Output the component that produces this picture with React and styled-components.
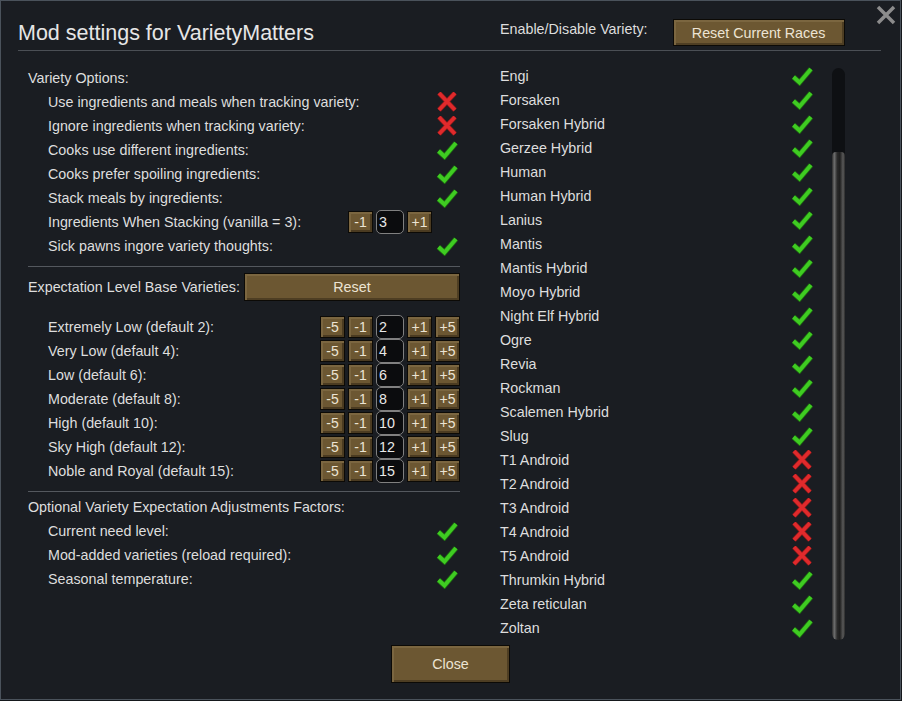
import React from 'react';
import styled, { createGlobalStyle } from 'styled-components';

const GlobalStyle = createGlobalStyle`
  body {
    margin: 0;
    background: #15181c;
    font-family: 'Liberation Sans', Arial, sans-serif;
  }
`;

const Window = styled.div`
  position: relative;
  width: 899px;
  height: 698px;
  background: #1a1d22;
  border: 1px solid #4a525b;
  display: flex;
  flex-direction: column;
  color: #dedede;
  font-size: 14.3px;
`;

const Header = styled.header`
  display: flex;
  align-items: flex-start;
  height: 49px;
  margin: 0 19px 0 17px;
  border-bottom: 1px solid #4b4f55;
`;

const Title = styled.h1`
  width: 482px;
  margin: 20px 0 0;
  font-size: 21.5px;
  font-weight: normal;
  line-height: 24px;
  color: #e6e6e6;
`;

const HeaderLabel = styled.span`
  margin-top: 18px;
  line-height: 20px;
`;

const Button = styled.button`
  font-family: inherit;
  font-size: 14.3px;
  color: #ece4d4;
  background: #6c5732;
  border: 1px solid #0c0a06;
  box-shadow: inset 2px 2px 0 #7b6640, inset -2px -2px 0 #4e3e23;
  padding: 0;
  cursor: pointer;
  width: ${(p) => p.$w || 'auto'};
  height: ${(p) => p.$h || '27px'};
`;

const HeaderButton = styled(Button)`
  margin: 18px 0 0 25px;
`;

const CloseX = styled.button`
  position: absolute;
  top: 3px;
  right: 3px;
  width: 22px;
  height: 22px;
  padding: 0;
  background: none;
  border: 0;
  cursor: pointer;
`;

const Body = styled.div`
  display: grid;
  grid-template-columns: 432px 345px;
  column-gap: 40px;
  padding-left: 27px;
  height: 589px;
`;

const Left = styled.div`
  padding-top: 15px;
`;

const Row = styled.div`
  display: flex;
  align-items: center;
  justify-content: space-between;
  height: 24px;
  padding-left: ${(p) => (p.$indent ? '20px' : '0')};
`;

const Divider = styled.hr`
  border: 0;
  border-top: 1px solid #54585e;
  margin: ${(p) => p.$m || '8px 0 6px'};
`;

const SectionHead = styled.div`
  display: flex;
  align-items: center;
  height: 28px;
  margin-bottom: 14px;

  ${Button} {
    flex: 1;
    margin-left: 4px;
    height: 28px;
  }
`;

const IconSlot = styled.span`
  display: flex;
  width: 22px;
  height: 20px;
  margin-right: 2px;
`;

const Stepper = styled.div`
  display: grid;
  grid-template-columns: 25px 25px 28px 25px 25px;
  column-gap: 3px;
  align-items: center;
`;

const StepBtn = styled(Button)`
  height: 22px;
  width: 100%;
  font-size: 14px;
  box-shadow: inset 2px 2px 0 #7b6640, inset -2px -2px 0 #4b3b21;
`;

const ValueBox = styled.div`
  box-sizing: border-box;
  height: 24px;
  background: #0b0c0e;
  border: 1px solid #808080;
  border-radius: 5px;
  padding: 3px 0 0 2px;
  font-size: 14.3px;
  color: #e8e8e8;
`;

const Right = styled.div`
  display: flex;
  padding-top: 13px;
`;

const RaceList = styled.div`
  width: 315px;
`;

const RaceRow = styled.div`
  display: flex;
  align-items: center;
  justify-content: space-between;
  height: 24px;
`;

const Track = styled.div`
  display: flex;
  flex-direction: column;
  justify-content: flex-end;
  width: 13px;
  height: 572px;
  margin: 4px 0 0 17px;
  background: #0e1013;
  border-radius: 7px;
`;

const Thumb = styled.div`
  height: 488px;
  border-radius: 4px 4px 6px 6px;
  background: linear-gradient(90deg, #2c2c2c 0%, #6e6e6e 18%, #2a2a2a 40%, #1e1e1e 60%, #5a5a5a 85%, #2a2a2a 100%);
`;

const Footer = styled.div`
  display: flex;
  justify-content: center;
  margin-top: 5px;
`;

const Check = () => (
  <svg width="22" height="20" viewBox="0 0 22 20">
    <polyline points="2.5,11 8.5,16.5 20,3" fill="none" stroke="#1f6e12" strokeWidth="5.4" />
    <polyline points="2.5,11 8.5,16.5 20,3" fill="none" stroke="#3fcc22" strokeWidth="3.8" />
  </svg>
);

const Cross = () => (
  <svg width="22" height="20" viewBox="0 0 22 20">
    <path d="M3 1 L19 18 M19 1 L3 18" fill="none" stroke="#8a1a1a" strokeWidth="5" />
    <path d="M3 1 L19 18 M19 1 L3 18" fill="none" stroke="#e02a2c" strokeWidth="3.6" />
  </svg>
);

const Toggle = ({ on }) => <IconSlot>{on ? <Check /> : <Cross />}</IconSlot>;

const NumStepper = ({ value, wide }) => (
  <Stepper>
    {wide ? <StepBtn>-5</StepBtn> : <span />}
    <StepBtn>-1</StepBtn>
    <ValueBox>{value}</ValueBox>
    <StepBtn>+1</StepBtn>
    {wide ? <StepBtn>+5</StepBtn> : <span />}
  </Stepper>
);

const varietyOptions = [
  ['Use ingredients and meals when tracking variety:', false],
  ['Ignore ingredients when tracking variety:', false],
  ['Cooks use different ingredients:', true],
  ['Cooks prefer spoiling ingredients:', true],
  ['Stack meals by ingredients:', true],
];

const levels = [
  ['Extremely Low (default 2):', 2],
  ['Very Low (default 4):', 4],
  ['Low (default 6):', 6],
  ['Moderate (default 8):', 8],
  ['High (default 10):', 10],
  ['Sky High (default 12):', 12],
  ['Noble and Royal (default 15):', 15],
];

const factors = [
  'Current need level:',
  'Mod-added varieties (reload required):',
  'Seasonal temperature:',
];

const races = [
  ['Engi', true], ['Forsaken', true], ['Forsaken Hybrid', true], ['Gerzee Hybrid', true],
  ['Human', true], ['Human Hybrid', true], ['Lanius', true], ['Mantis', true],
  ['Mantis Hybrid', true], ['Moyo Hybrid', true], ['Night Elf Hybrid', true], ['Ogre', true],
  ['Revia', true], ['Rockman', true], ['Scalemen Hybrid', true], ['Slug', true],
  ['T1 Android', false], ['T2 Android', false], ['T3 Android', false], ['T4 Android', false],
  ['T5 Android', false], ['Thrumkin Hybrid', true], ['Zeta reticulan', true], ['Zoltan', true],
];

const App = () => (
  <>
    <GlobalStyle />
    <Window>
      <Header>
        <Title>Mod settings for VarietyMatters</Title>
        <HeaderLabel>Enable/Disable Variety:</HeaderLabel>
        <HeaderButton $w="172px">Reset Current Races</HeaderButton>
      </Header>
      <CloseX aria-label="close">
        <svg width="22" height="22" viewBox="0 0 22 22">
          <path d="M3 3 L19 19 M19 3 L3 19" stroke="#8c8c8c" strokeWidth="3.5" />
        </svg>
      </CloseX>

      <Body>
        <Left>
          <Row>Variety Options:</Row>
          {varietyOptions.map(([label, on]) => (
            <Row $indent key={label}>
              {label}
              <Toggle on={on} />
            </Row>
          ))}
          <Row $indent>
            Ingredients When Stacking (vanilla = 3):
            <NumStepper value={3} />
          </Row>
          <Row $indent>
            Sick pawns ingore variety thoughts:
            <Toggle on />
          </Row>

          <Divider />
          <SectionHead>
            Expectation Level Base Varieties:
            <Button>Reset</Button>
          </SectionHead>
          {levels.map(([label, v]) => (
            <Row $indent key={label}>
              {label}
              <NumStepper value={v} wide />
            </Row>
          ))}

          <Divider $m="8px 0 3px" />
          <Row>Optional Variety Expectation Adjustments Factors:</Row>
          {factors.map((label) => (
            <Row $indent key={label}>
              {label}
              <Toggle on />
            </Row>
          ))}
        </Left>

        <Right>
          <RaceList>
            {races.map(([name, on]) => (
              <RaceRow key={name}>
                {name}
                <Toggle on={on} />
              </RaceRow>
            ))}
          </RaceList>
          <Track>
            <Thumb />
          </Track>
        </Right>
      </Body>

      <Footer>
        <Button $w="119px" $h="38px">Close</Button>
      </Footer>
    </Window>
  </>
);

export default App;
